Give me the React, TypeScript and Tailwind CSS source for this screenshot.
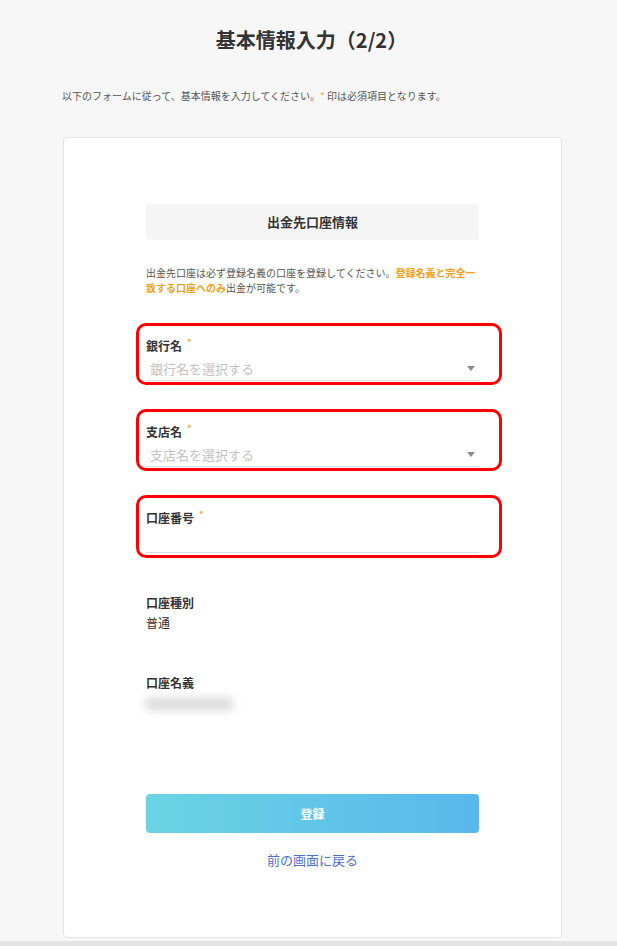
import React from 'react';

const FONT = { fontFamily: '"Noto Sans CJK JP", "Noto Sans", sans-serif' };

function Req() {
  return <span className="ml-[5px] align-top text-[9px] leading-[10px] text-[#f0a830]">*</span>;
}

// red annotation box lying over the field
function Highlight({ bottom = 4 }: { bottom?: number }) {
  return (
    <div
      className="pointer-events-none absolute -left-[10px] -right-[23px] -top-[15px] rounded-[10px] border-[3px] border-[#ff0000]"
      style={{ bottom: -bottom }}
    />
  );
}

function SelectField({ label, placeholder }: { label: string; placeholder: string }) {
  return (
    <div className="relative mt-[43px]">
      <div className="h-[16px] text-[12px] font-bold leading-[16px] text-[#333]">
        {label}
        <Req />
      </div>
      <div className="mt-[3px] flex h-[24px] items-center justify-between border-b border-[#dcdcdc] pl-[4px] pr-[4px]">
        <span className="text-[13px] leading-[20px] text-[#c2c2c2]">{placeholder}</span>
        <svg width="8" height="5" viewBox="0 0 8 5">
          <path d="M0 0 L8 0 L4 5 Z" fill="#8a8a8a" />
        </svg>
      </div>
      <Highlight />
    </div>
  );
}

export default function App() {
  return (
    <div className="min-h-screen overflow-hidden bg-[#f7f7f7] text-[#333]" style={FONT}>
      <h1 className="pl-[6px] pt-[26px] text-center text-[20px] font-bold leading-[28px] text-[#333]">
        基本情報入力（2/2）
      </h1>
      <p className="mt-[35px] pl-[62px] text-[10px] leading-[14px] text-[#555]">
        以下のフォームに従って、基本情報を入力してください。
        <span className="text-[#f0a830]">*</span> 印は必須項目となります。
      </p>

      <div className="ml-[63px] mt-[34px] w-[499px] rounded-[4px] border border-[#e4e4e4] bg-white pb-[68px] pt-[66px]">
        <div className="mx-auto w-[333px]">
          <div className="flex h-[36px] items-center justify-center rounded-[3px] bg-[#f5f5f5] text-[13px] font-bold text-[#333]">
            出金先口座情報
          </div>
          <div className="mt-[25px] text-[10px] leading-[15px] text-[#555]">
            <div className="whitespace-nowrap">
              出金先口座は必ず登録名義の口座を登録してください。
              <span className="font-bold text-[#f0a020]">登録名義と完全一</span>
            </div>
            <div className="whitespace-nowrap">
              <span className="font-bold text-[#f0a020]">致する口座へのみ</span>
              出金が可能です。
            </div>
          </div>

          <SelectField label="銀行名" placeholder="銀行名を選択する" />
          <SelectField label="支店名" placeholder="支店名を選択する" />

          <div className="relative mt-[43px]">
            <div className="h-[16px] text-[12px] font-bold leading-[16px] text-[#333]">
              口座番号
              <Req />
            </div>
            <div className="mt-[3px] h-[24px] border-b border-[#dcdcdc]" />
            <Highlight bottom={5} />
          </div>

          <div className="mt-[42px]">
            <div className="text-[12px] font-bold leading-[16px] text-[#333]">口座種別</div>
            <div className="mt-[4px] text-[12px] leading-[16px] text-[#333]">普通</div>
          </div>

          <div className="mt-[44px]">
            <div className="text-[12px] font-bold leading-[16px] text-[#333]">口座名義</div>
            <div className="mt-[6px] h-[14px] w-[90px] -translate-x-[2px] rounded-full bg-[#dedede] blur-[4px]" />
          </div>

          <button className="mt-[83px] flex h-[39px] w-full items-center justify-center rounded-[4px] bg-linear-to-r from-[#6bd4e3] to-[#58b8ec] text-[12px] font-bold text-white">
            登録
          </button>
          <div className="mt-[18px] text-center text-[13px] leading-[18px] text-[#4a70c8]">
            前の画面に戻る
          </div>
        </div>
      </div>
      <div className="mt-[3px] h-[6px] bg-[#e4e4e4]" />
    </div>
  );
}
